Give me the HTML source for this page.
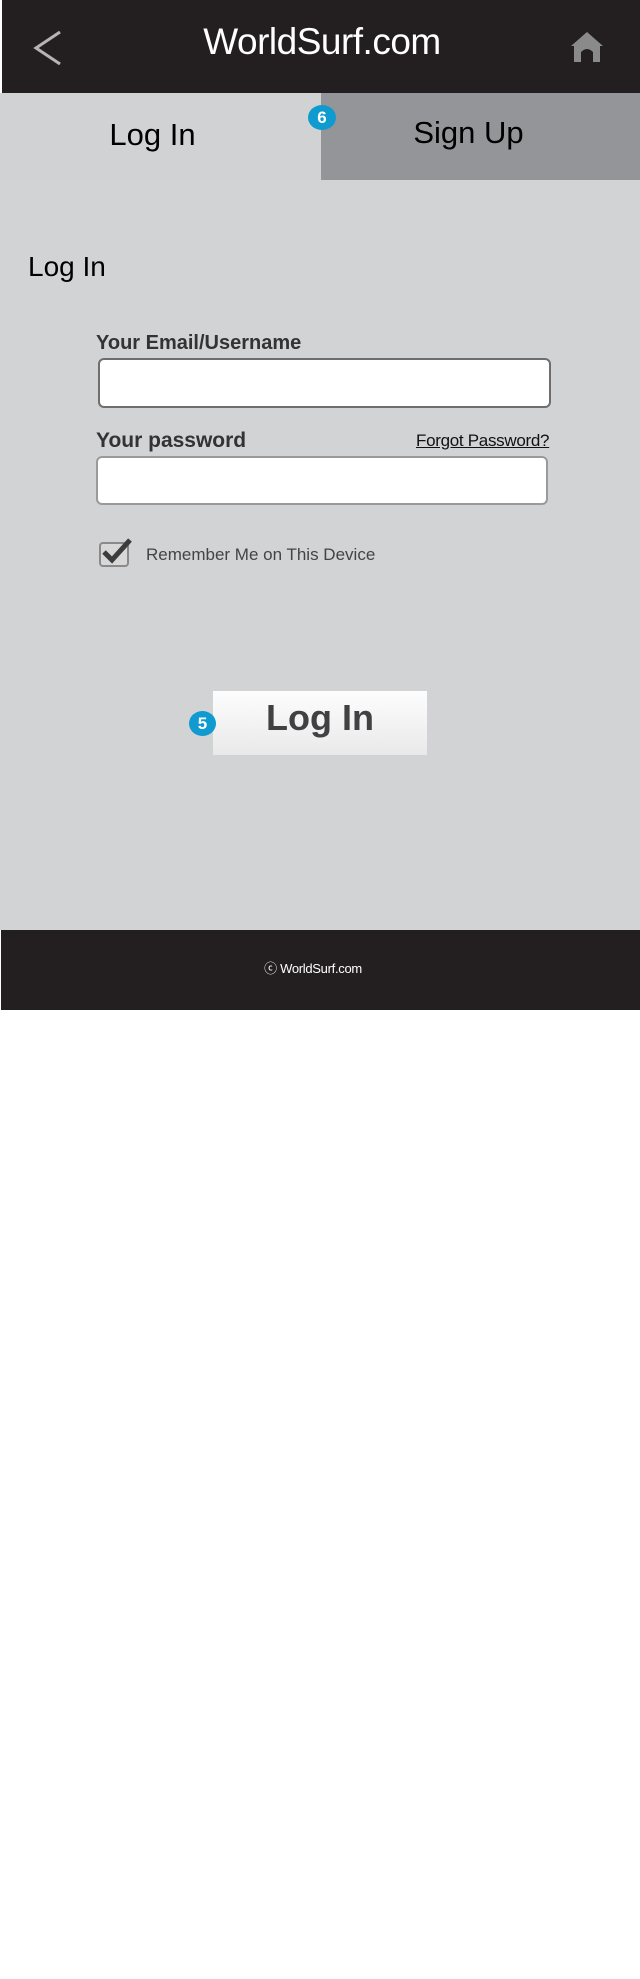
<!DOCTYPE html>
<html><head><meta charset="utf-8"><style>
*{margin:0;padding:0;box-sizing:border-box}
body{width:640px;height:1979px;background:#fff;font-family:"Liberation Sans",Arial,sans-serif;position:relative;overflow:hidden}
.a{position:absolute}
</style></head><body>
<div class="a" style="left:2px;top:0;width:638px;height:93px;background:#231f20"></div>
<svg class="a" style="left:32px;top:30px" width="32" height="36"><polyline points="28,2 4,18 28,34" fill="none" stroke="#b5b5b5" stroke-width="3"/></svg>
<div class="a" style="left:0;width:644px;top:21px;text-align:center;color:#fff;font-size:37px;letter-spacing:-0.5px">WorldSurf.com</div>
<svg class="a" style="left:570px;top:30px" width="34" height="34"><path d="M17 2 L33 16 L30 16 L30 32 L23 32 L23 22 Q17 16 11 22 L11 32 L4 32 L4 16 L1 16 Z" fill="#8a8a8a"/></svg>
<div class="a" style="left:0;top:93px;width:321px;height:87px;background:#d1d2d4"></div>
<div class="a" style="left:321px;top:93px;width:319px;height:87px;background:#939598"></div>
<div class="a" style="left:0;top:180px;width:640px;height:750px;background:#d1d3d4"></div>
<div class="a" style="left:0;width:305px;top:117px;text-align:center;font-size:31px;color:#000">Log In</div>
<div class="a" style="left:321px;width:319px;top:115px;text-align:center;font-size:31px;color:#000;padding-right:24px">Sign Up</div>
<div class="a" style="left:308px;top:105px;width:28px;height:25px;border-radius:50%;background:#0f9ad0;color:#fff;font-weight:bold;font-size:17px;text-align:center;line-height:25px">6</div>
<div class="a" style="left:28px;top:251px;font-size:28px;color:#000">Log In</div>
<div class="a" style="left:96px;top:332px;font-size:20px;font-weight:bold;color:#333">Your Email/Username</div>
<div class="a" style="left:98px;top:358px;width:453px;height:50px;background:#fff;border:2px solid #6e6e6e;border-radius:6px"></div>
<div class="a" style="left:96px;top:429px;font-size:21px;font-weight:bold;color:#333">Your password</div>
<div class="a" style="left:416px;top:431px;font-size:17px;color:#111;text-decoration:underline;letter-spacing:-0.3px">Forgot Password?</div>
<div class="a" style="left:96px;top:456px;width:452px;height:49px;background:#fff;border:2px solid #9a9a9a;border-radius:6px"></div>
<div class="a" style="left:99px;top:542px;width:30px;height:25px;border:2px solid #8a8a8a;border-radius:4px;background:#d8d8d8"></div>
<svg class="a" style="left:100px;top:536px" width="34" height="28"><polyline points="4,16 12,24 30,4" fill="none" stroke="#3d3d3d" stroke-width="5"/></svg>
<div class="a" style="left:146px;top:545px;font-size:17px;color:#444">Remember Me on This Device</div>
<div class="a" style="left:213px;top:691px;width:214px;height:64px;background:linear-gradient(#fdfdfd,#e9e9ea)"></div>
<div class="a" style="left:213px;width:214px;top:697px;text-align:center;font-size:36px;font-weight:bold;color:#414042">Log In</div>
<div class="a" style="left:189px;top:711px;width:27px;height:25px;border-radius:50%;background:#0f9ad0;color:#fff;font-weight:bold;font-size:17px;text-align:center;line-height:25px">5</div>
<div class="a" style="left:1px;top:930px;width:639px;height:80px;background:#231f20"></div>
<div class="a" style="left:0;width:640px;top:958px;text-align:center;color:#fff;font-size:13px;padding-right:14px;letter-spacing:-0.3px">ⓒ WorldSurf.com</div>
</body></html>
